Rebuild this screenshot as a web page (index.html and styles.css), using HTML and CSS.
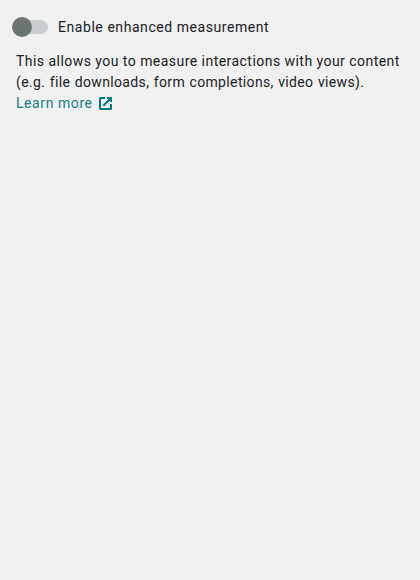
FILE: index.html
```html
<!DOCTYPE html>
<html lang="en">
<head>
<meta charset="utf-8">
<title>Enhanced measurement</title>
<link rel="stylesheet" href="styles.css">
</head>
<body>
<main class="panel">
  <div class="toggle-row">
    <span class="switch" role="switch" aria-checked="false" aria-labelledby="label"><span class="thumb"></span></span>
    <span class="label" id="label">Enable enhanced measurement</span>
  </div>
  <p class="description">
    <span class="line first">This allows you to measure interactions with your content</span>
    <span class="line second">(e.g. file downloads, form completions, video views).</span>
    <a class="link" href="#"><span class="link-text">Learn more</span><svg class="icon" viewBox="0 0 13 13" aria-hidden="true"><path d="M6 1H1.500Q1 1 1 1.500V11.500Q1 12 1.500 12H11.500Q12 12 12 11.500V7M8 1H12V5M12 1L4.300 8.700"/></svg></a>
  </p>
</main>
</body>
</html>
```

FILE: styles.css
```css
body {
  margin: 0;
  background: #f0f0f0;
  color: #202124;
  font: 400 14px/21px Roboto, sans-serif;
}
.panel { padding: 16px; }
.toggle-row { display: flex; align-items: center; height: 22px; }
.switch {
  display: flex;
  align-items: center;
  width: 32px;
  height: 14px;
  border-radius: 7px;
  background: #c9ced1;
}
.thumb {
  flex: none;
  width: 20px;
  height: 20px;
  margin-left: -4px;
  border-radius: 50%;
  background: #6c746f;
}
.label { margin-left: 10px; white-space: nowrap; letter-spacing: 0.56px; }
.description { margin: 13px 0 0; }
.line { display: block; white-space: nowrap; }
.first { letter-spacing: 0.46px; }
.second { letter-spacing: 0.36px; word-spacing: 0.6px; }
.link { display: flex; align-items: center; color: #00797a; text-decoration: none; letter-spacing: 0.58px; }
.link-text { width: 76px; white-space: nowrap; color: #168080; }
.icon { width: 13px; height: 13px; margin-left: 7px; fill: none; stroke: currentColor; stroke-width: 2; }
```
